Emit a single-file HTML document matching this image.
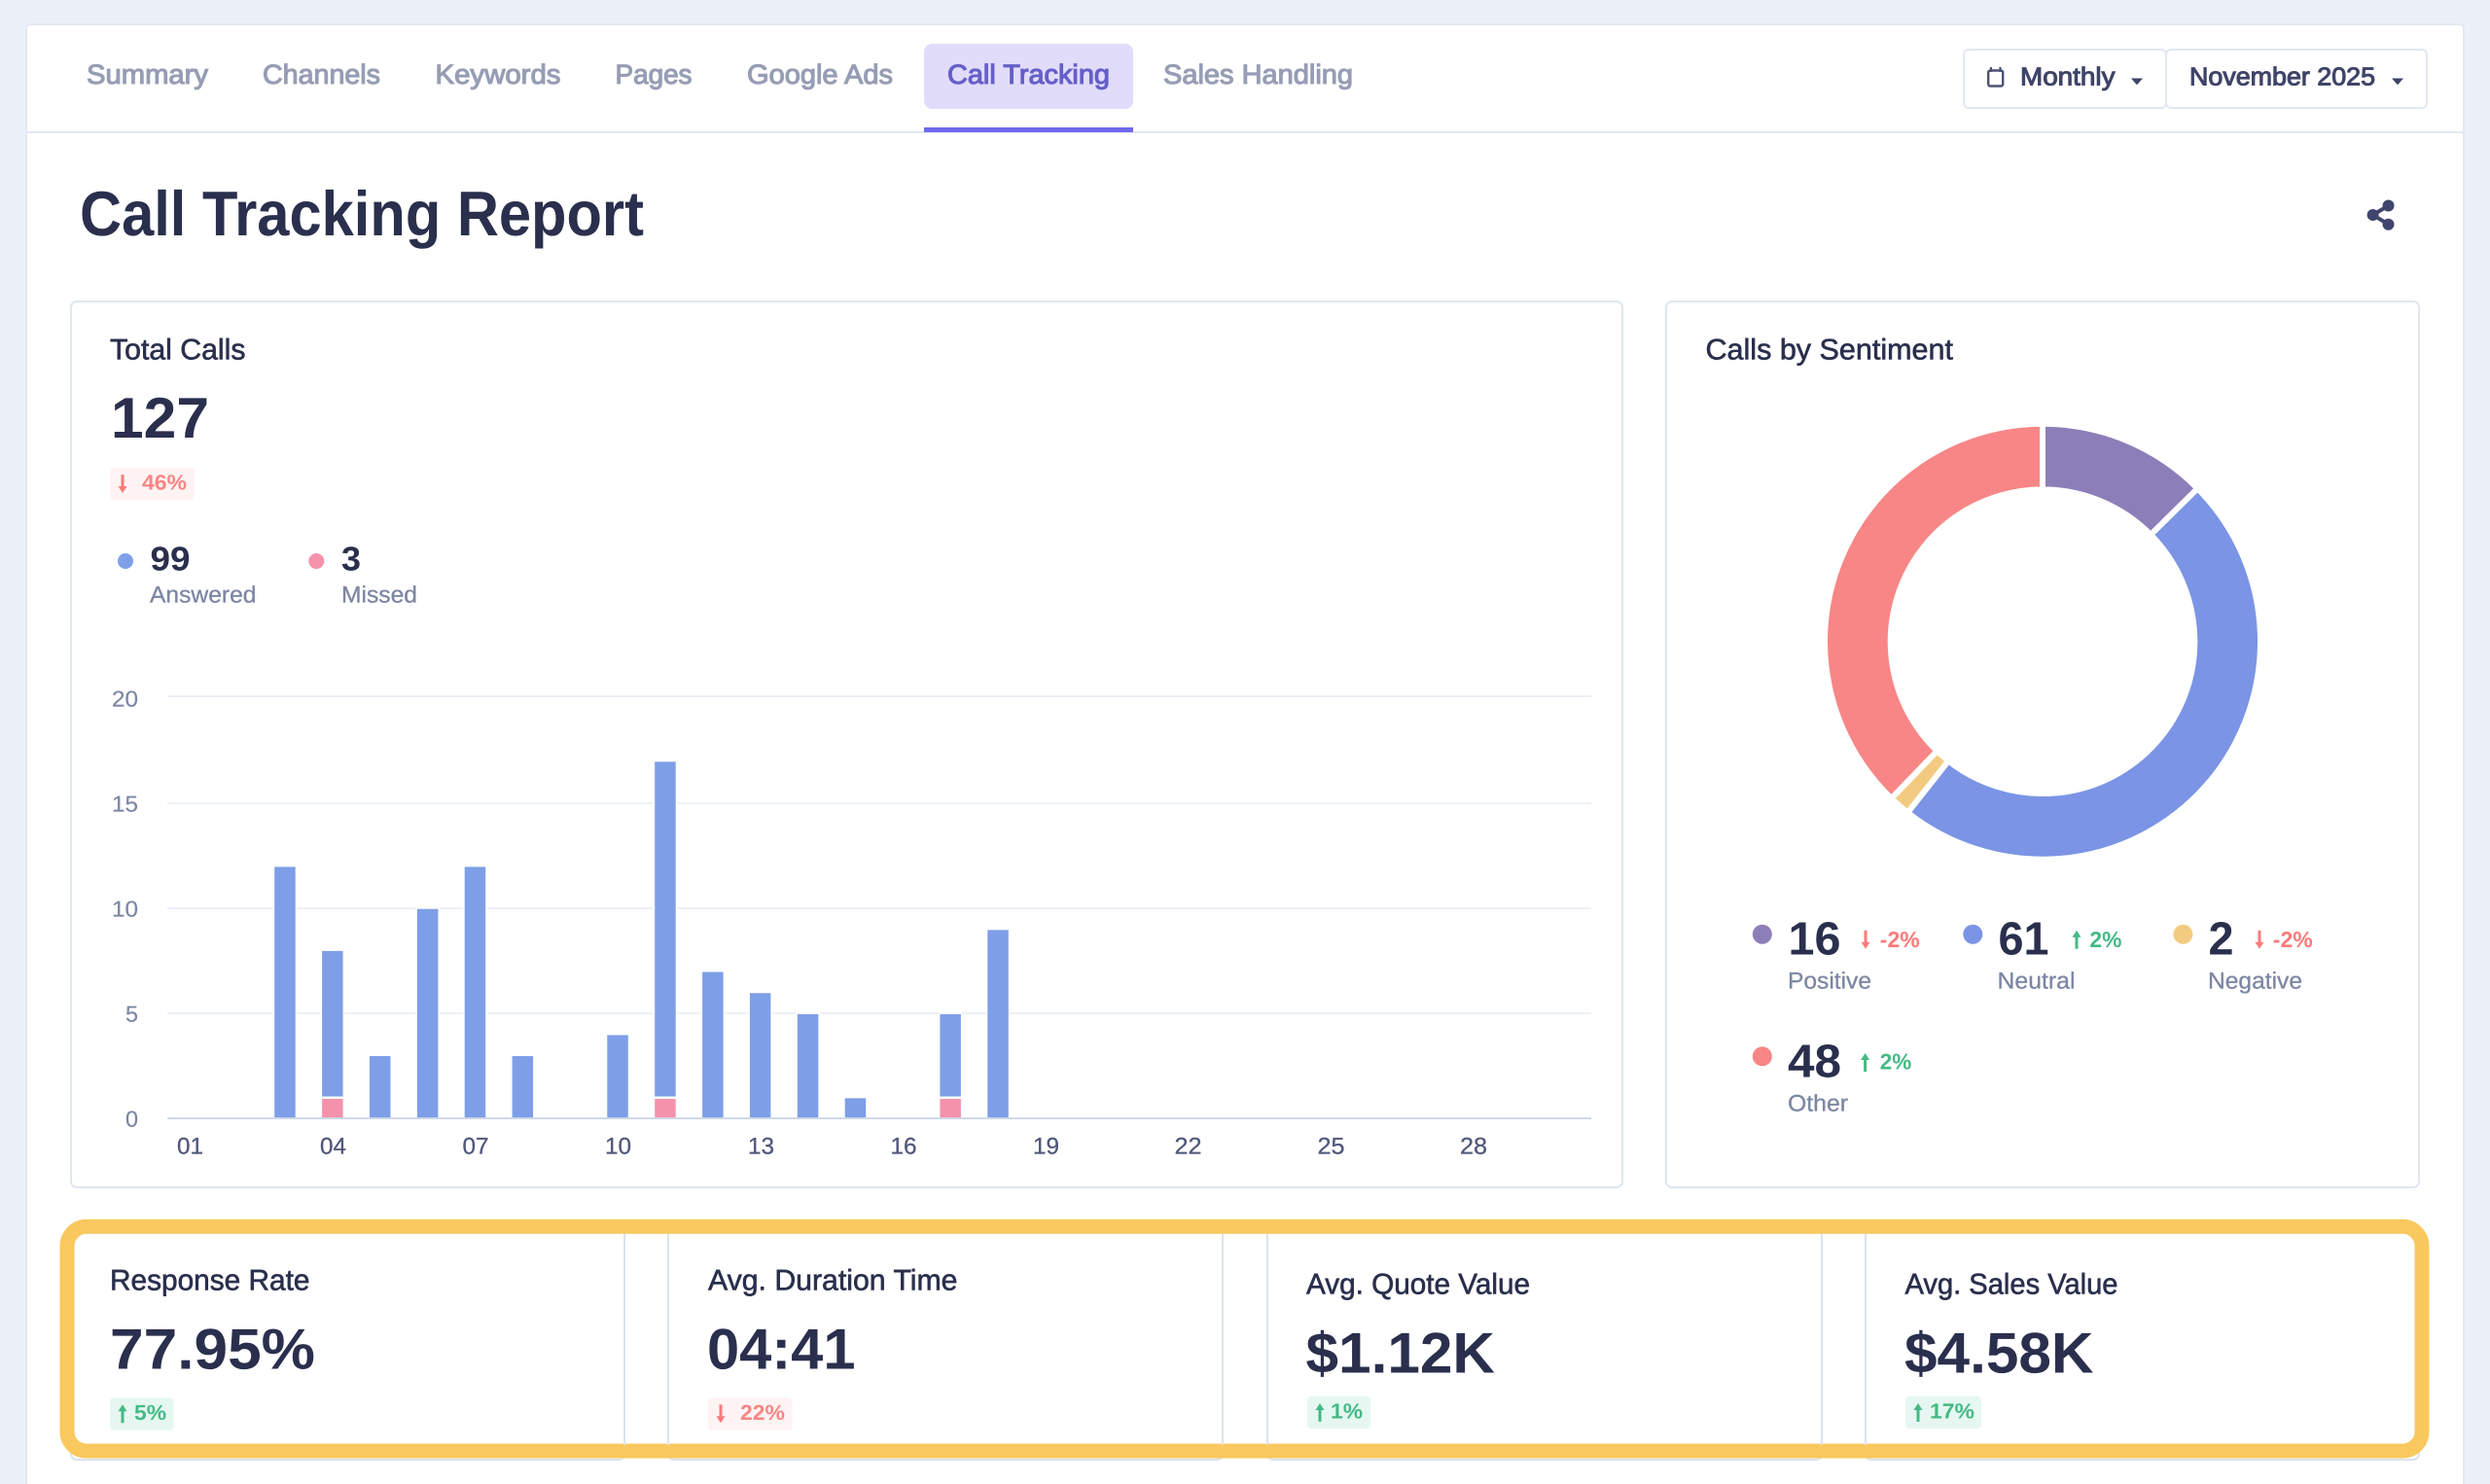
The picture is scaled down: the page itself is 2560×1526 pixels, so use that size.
<!DOCTYPE html>
<html lang="en">
<head>
<meta charset="utf-8">
<title>Call Tracking Report</title>
<style>
html,body{margin:0;padding:0;background:#ecf1f9;width:2560px;height:1526px;overflow:hidden}
svg{display:block;position:absolute;left:0;top:0}
text{font-family:"Liberation Sans",sans-serif;text-rendering:geometricPrecision;white-space:pre}
.tab{font-size:28px;fill:#969db4;stroke:#969db4;stroke-width:1.1px}
.tabA{font-size:28px;fill:#665fc9;stroke:#665fc9;stroke-width:1.1px}
.sel{font-size:26px;fill:#3f4468;stroke:#3f4468;stroke-width:1px}
.title{font-size:65px;font-weight:700;fill:#2a2f4d}
.h{font-size:30px;fill:#2a2f4d;stroke:#2a2f4d;stroke-width:.6px}
.big{font-size:59px;font-weight:700;fill:#2a2f4d}
.n{font-size:35px;font-weight:700;fill:#2a2f4d}
.n2{font-size:48px;font-weight:700;fill:#2a2f4d}
.lab{font-size:24px;fill:#7c86a3;stroke:#7c86a3;stroke-width:.3px}
.yl{font-size:23px;fill:#7c86a3;stroke:#7c86a3;stroke-width:.2px}
.xl{font-size:24px;fill:#50577a;stroke:#50577a;stroke-width:.3px}
.r{font-size:22px;font-weight:700;fill:#f98585}
.g{font-size:22px;font-weight:700;fill:#45b985}
.r2{font-size:23px;font-weight:700;fill:#fb7a7a}
.g2{font-size:23px;font-weight:700;fill:#45b985}
</style>
</head>
<body>
<svg width="2560" height="1526" viewBox="0 0 2560 1526" xmlns="http://www.w3.org/2000/svg">
  <!-- page panel -->
  <rect x="0" y="0" width="2560" height="1526" fill="#ecf1f9"/>
  <rect x="27" y="25" width="2506" height="1520" rx="4" fill="#fff" stroke="#e3e9f2" stroke-width="2"/>
  <rect x="27" y="135" width="2506" height="2" fill="#e3e9f2"/>

  <!-- tabs -->
  <rect x="950" y="45" width="215" height="67" rx="8" fill="#e1dcfa"/>
  <rect x="950" y="131" width="215" height="5" fill="#6f68ee"/>
  <text class="tab" x="89" y="86" textLength="125" lengthAdjust="spacingAndGlyphs">Summary</text>
  <text class="tab" x="270" y="86" textLength="121" lengthAdjust="spacingAndGlyphs">Channels</text>
  <text class="tab" x="447.5" y="86" textLength="129" lengthAdjust="spacingAndGlyphs">Keywords</text>
  <text class="tab" x="632.5" y="86" textLength="79" lengthAdjust="spacingAndGlyphs">Pages</text>
  <text class="tab" x="768" y="86" textLength="150" lengthAdjust="spacingAndGlyphs">Google Ads</text>
  <text class="tabA" x="974" y="86" textLength="167" lengthAdjust="spacingAndGlyphs">Call Tracking</text>
  <text class="tab" x="1196" y="86" textLength="195" lengthAdjust="spacingAndGlyphs">Sales Handling</text>

  <!-- selects -->
  <rect x="2019" y="51" width="208" height="60" rx="5" fill="#fff" stroke="#e2e8f2" stroke-width="2"/>
  <rect x="2227" y="51" width="268" height="60" rx="5" fill="#fff" stroke="#e2e8f2" stroke-width="2"/>
  <rect x="2044.2" y="72.5" width="15" height="16" rx="2" fill="none" stroke="#4d5274" stroke-width="2.4"/>
  <path d="M2047 69v5M2056.5 69v5" stroke="#4d5274" stroke-width="2.2" fill="none"/>
  <text class="sel" x="2077" y="87.5" textLength="97.5" lengthAdjust="spacingAndGlyphs">Monthly</text>
  <path d="M2191 80.5h12l-5.2 6a1 1 0 0 1-1.6 0z" fill="#3f4468"/>
  <text class="sel" x="2251" y="87.5" textLength="191" lengthAdjust="spacingAndGlyphs">November 2025</text>
  <path d="M2459 80.5h12l-5.2 6a1 1 0 0 1-1.6 0z" fill="#3f4468"/>

  <!-- title -->
  <text class="title" x="82" y="242" textLength="580" lengthAdjust="spacingAndGlyphs">Call Tracking Report</text>

  <!-- share -->
  <path d="M2455.5 211.5L2439.6 221L2455.5 230.7" fill="none" stroke="#40456d" stroke-width="4"/>
  <circle cx="2455.5" cy="211.5" r="6" fill="#40456d"/>
  <circle cx="2439.6" cy="221" r="6" fill="#40456d"/>
  <circle cx="2455.5" cy="230.7" r="6" fill="#40456d"/>

  <!-- cards -->
  <rect x="73" y="310" width="1595" height="911" rx="6" fill="#fff" stroke="#dfe7f1" stroke-width="2"/>
  <rect x="1713" y="310" width="774" height="911" rx="6" fill="#fff" stroke="#dfe7f1" stroke-width="2"/>

  <!-- Total Calls -->
  <text class="h" x="113" y="369.3" textLength="139.5" lengthAdjust="spacingAndGlyphs">Total Calls</text>
  <text class="big" x="114" y="450" textLength="101" lengthAdjust="spacingAndGlyphs">127</text>
  <rect x="113.3" y="481" width="87" height="33" rx="4" fill="#fff3f3"/>
  <path d="M126 507l4.5-7h-3v-12h-3v12h-3z" fill="#fa7b7b"/>
  <text class="r" x="146" y="503.3" textLength="46" lengthAdjust="spacingAndGlyphs">46%</text>

  <circle cx="129" cy="577" r="8" fill="#7ea0e8"/>
  <text class="n" x="154.5" y="586.7" textLength="41" lengthAdjust="spacingAndGlyphs">99</text>
  <text class="lab" x="154" y="619.3" textLength="109.5" lengthAdjust="spacingAndGlyphs">Answered</text>
  <circle cx="325.3" cy="577" r="8" fill="#f592ac"/>
  <text class="n" x="351" y="586.7" textLength="20" lengthAdjust="spacingAndGlyphs">3</text>
  <text class="lab" x="351" y="619.3" textLength="78" lengthAdjust="spacingAndGlyphs">Missed</text>

  <!-- chart grid -->
  <g fill="#edf1f6">
    <rect x="172" y="715" width="1464" height="2"/>
    <rect x="172" y="825" width="1464" height="2"/>
    <rect x="172" y="933" width="1464" height="2"/>
    <rect x="172" y="1041" width="1464" height="2"/>
  </g>
  <!-- bars -->
  <g fill="#7e9fe7" stroke="#fff" stroke-width="3" style="paint-order:stroke fill">
    <rect x="282.2" y="891.4" width="21.5" height="258.1"/>
    <rect x="331.1" y="977.9" width="21.5" height="149.6"/>
    <rect x="380" y="1086" width="21.5" height="63.5"/>
    <rect x="428.9" y="934.7" width="21.5" height="214.8"/>
    <rect x="477.7" y="891.4" width="21.5" height="258.1"/>
    <rect x="526.6" y="1086" width="21.5" height="63.5"/>
    <rect x="624.3" y="1064.4" width="21.5" height="85.1"/>
    <rect x="673.2" y="783.3" width="21.5" height="344.2"/>
    <rect x="722.1" y="999.5" width="21.5" height="150"/>
    <rect x="770.9" y="1021.2" width="21.5" height="128.3"/>
    <rect x="819.8" y="1042.8" width="21.5" height="106.7"/>
    <rect x="868.7" y="1129.3" width="21.5" height="20.2"/>
    <rect x="966.4" y="1042.8" width="21.5" height="84.7"/>
    <rect x="1015.3" y="956.3" width="21.5" height="193.2"/>
  </g>
  <g fill="#f492ab">
    <rect x="331.1" y="1130" width="21.5" height="19.5"/>
    <rect x="673.2" y="1130" width="21.5" height="19.5"/>
    <rect x="966.4" y="1130" width="21.5" height="19.5"/>
  </g>
  <rect x="172" y="1149" width="1464" height="2" fill="#ced9e8"/>

  <!-- axis labels -->
  <text class="yl" x="115" y="726.7" textLength="27" lengthAdjust="spacingAndGlyphs">20</text>
  <text class="yl" x="115" y="834.7" textLength="27" lengthAdjust="spacingAndGlyphs">15</text>
  <text class="yl" x="115" y="942.7" textLength="27" lengthAdjust="spacingAndGlyphs">10</text>
  <text class="yl" x="129" y="1050.7" textLength="13" lengthAdjust="spacingAndGlyphs">5</text>
  <text class="yl" x="129" y="1158.7" textLength="13" lengthAdjust="spacingAndGlyphs">0</text>
  <text class="xl" x="182" y="1186.7" textLength="27" lengthAdjust="spacingAndGlyphs">01</text>
  <text class="xl" x="329" y="1186.7" textLength="27" lengthAdjust="spacingAndGlyphs">04</text>
  <text class="xl" x="475.5" y="1186.7" textLength="27" lengthAdjust="spacingAndGlyphs">07</text>
  <text class="xl" x="622" y="1186.7" textLength="27" lengthAdjust="spacingAndGlyphs">10</text>
  <text class="xl" x="769" y="1186.7" textLength="27" lengthAdjust="spacingAndGlyphs">13</text>
  <text class="xl" x="915.5" y="1186.7" textLength="27" lengthAdjust="spacingAndGlyphs">16</text>
  <text class="xl" x="1062" y="1186.7" textLength="27" lengthAdjust="spacingAndGlyphs">19</text>
  <text class="xl" x="1207.5" y="1186.7" textLength="28" lengthAdjust="spacingAndGlyphs">22</text>
  <text class="xl" x="1354.5" y="1186.7" textLength="28" lengthAdjust="spacingAndGlyphs">25</text>
  <text class="xl" x="1501" y="1186.7" textLength="28" lengthAdjust="spacingAndGlyphs">28</text>

  <!-- Calls by Sentiment -->
  <text class="h" x="1753.5" y="369.3" textLength="254.5" lengthAdjust="spacingAndGlyphs">Calls by Sentiment</text>
  <g stroke="#fff" stroke-width="6" stroke-linejoin="miter">
    <path d="M2100 435.7A224 224 0 0 1 2259.37 502.29L2211.2 549.86A156.3 156.3 0 0 0 2100 503.4Z" fill="#8c7eb8"/>
    <path d="M2259.37 502.29A224 224 0 0 1 1961.27 835.57L2003.2 782.42A156.3 156.3 0 0 0 2211.2 549.86Z" fill="#7b94e5"/>
    <path d="M1961.27 835.57A224 224 0 0 1 1944.57 821L1991.55 772.25A156.3 156.3 0 0 0 2003.2 782.42Z" fill="#f3cb80"/>
    <path d="M1944.57 821A224 224 0 0 1 2100 435.7L2100 503.4A156.3 156.3 0 0 0 1991.55 772.25Z" fill="#f88686"/>
  </g>

  <!-- legend -->
  <circle cx="1811.8" cy="960.7" r="10" fill="#8c7eb8"/>
  <text class="n2" x="1838.5" y="981.7" textLength="54" lengthAdjust="spacingAndGlyphs">16</text>
  <path d="M1918 975.7l4.5-7h-3v-12h-3v12h-3z" fill="#fb7a7a"/>
  <text class="r2" x="1932.8" y="974" textLength="41" lengthAdjust="spacingAndGlyphs">-2%</text>
  <text class="lab" x="1838" y="1016.7" textLength="86" lengthAdjust="spacingAndGlyphs">Positive</text>

  <circle cx="2028.3" cy="960.7" r="10" fill="#7b94e5"/>
  <text class="n2" x="2054.5" y="981.7" textLength="52" lengthAdjust="spacingAndGlyphs">61</text>
  <path d="M2135 956.7l4.5 7h-3v12h-3v-12h-3z" fill="#45b985"/>
  <text class="g2" x="2148.4" y="974" textLength="33" lengthAdjust="spacingAndGlyphs">2%</text>
  <text class="lab" x="2053.5" y="1016.7" textLength="80" lengthAdjust="spacingAndGlyphs">Neutral</text>

  <circle cx="2244.4" cy="960.7" r="10" fill="#f3cb80"/>
  <text class="n2" x="2270.5" y="981.7" textLength="26" lengthAdjust="spacingAndGlyphs">2</text>
  <path d="M2323 975.7l4.5-7h-3v-12h-3v12h-3z" fill="#fb7a7a"/>
  <text class="r2" x="2336.8" y="974" textLength="41" lengthAdjust="spacingAndGlyphs">-2%</text>
  <text class="lab" x="2270" y="1016.7" textLength="97" lengthAdjust="spacingAndGlyphs">Negative</text>

  <circle cx="1811.8" cy="1086.3" r="10" fill="#f88686"/>
  <text class="n2" x="1838" y="1107.7" textLength="55" lengthAdjust="spacingAndGlyphs">48</text>
  <path d="M1917.6 1083l4.5 7h-3v12h-3v-12h-3z" fill="#45b985"/>
  <text class="g2" x="1932.8" y="1099.3" textLength="32.5" lengthAdjust="spacingAndGlyphs">2%</text>
  <text class="lab" x="1838" y="1142.7" textLength="62" lengthAdjust="spacingAndGlyphs">Other</text>

  <!-- KPI cards -->
  <g fill="#fff" stroke="#dbe3ec" stroke-width="2">
    <rect x="73" y="1258" width="569" height="243" rx="6"/>
    <rect x="687" y="1258" width="570" height="243" rx="6"/>
    <rect x="1303" y="1258" width="570" height="243" rx="6"/>
    <rect x="1918" y="1258" width="569" height="243" rx="6"/>
  </g>
  <!-- highlight frame -->
  <rect x="69" y="1261.3" width="2421" height="230.7" rx="20" fill="none" stroke="#f9c85e" stroke-width="15"/>
  <g fill="#dbe3ec">
    <rect x="641" y="1269" width="2" height="217"/>
    <rect x="686" y="1269" width="2" height="217"/>
    <rect x="1256" y="1269" width="2" height="217"/>
    <rect x="1302" y="1269" width="2" height="217"/>
    <rect x="1872" y="1269" width="2" height="217"/>
    <rect x="1917" y="1269" width="2" height="217"/>
  </g>

  <text class="h" x="113" y="1326.7" textLength="205.5" lengthAdjust="spacingAndGlyphs">Response Rate</text>
  <text class="big" x="113" y="1407.3" textLength="211" lengthAdjust="spacingAndGlyphs">77.95%</text>
  <rect x="113" y="1437.3" width="65.5" height="33.4" rx="4" fill="#e6f7f1"/>
  <path d="M126 1444.3l4.5 7h-3v12h-3v-12h-3z" fill="#45b985"/>
  <text class="g" x="138" y="1460" textLength="33" lengthAdjust="spacingAndGlyphs">5%</text>

  <text class="h" x="728" y="1326.7" textLength="256.5" lengthAdjust="spacingAndGlyphs">Avg. Duration Time</text>
  <text class="big" x="727" y="1407.3" textLength="152.5" lengthAdjust="spacingAndGlyphs">04:41</text>
  <rect x="727.8" y="1437.3" width="86.7" height="33.4" rx="4" fill="#fff3f3"/>
  <path d="M741 1463.3l4.5-7h-3v-12h-3v12h-3z" fill="#fa7b7b"/>
  <text class="r" x="761" y="1460" textLength="46" lengthAdjust="spacingAndGlyphs">22%</text>

  <text class="h" x="1343" y="1330.7" textLength="230" lengthAdjust="spacingAndGlyphs">Avg. Quote Value</text>
  <text class="big" x="1342.5" y="1411.7" textLength="194.5" lengthAdjust="spacingAndGlyphs">$1.12K</text>
  <rect x="1344" y="1435.7" width="65" height="33.4" rx="4" fill="#e6f7f1"/>
  <path d="M1357 1443l4.5 7h-3v12h-3v-12h-3z" fill="#45b985"/>
  <text class="g" x="1368" y="1458.3" textLength="33" lengthAdjust="spacingAndGlyphs">1%</text>

  <text class="h" x="1958.5" y="1330.7" textLength="219" lengthAdjust="spacingAndGlyphs">Avg. Sales Value</text>
  <text class="big" x="1958" y="1411.7" textLength="194.5" lengthAdjust="spacingAndGlyphs">$4.58K</text>
  <rect x="1959" y="1435.7" width="78" height="33.4" rx="4" fill="#e6f7f1"/>
  <path d="M1972 1443l4.5 7h-3v12h-3v-12h-3z" fill="#45b985"/>
  <text class="g" x="1984" y="1458.3" textLength="46" lengthAdjust="spacingAndGlyphs">17%</text>
</svg>
</body>
</html>
